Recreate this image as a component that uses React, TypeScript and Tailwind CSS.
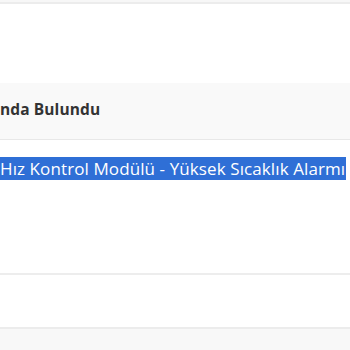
export default function App() {
  return (
    <div className="w-[350px] h-[350px] overflow-hidden bg-white text-[#333]" style={{ fontFamily: '"Open Sans", "Noto Sans", sans-serif' }}>
      <div className="h-[2px] bg-[#f7f7f7]" />
      <div className="h-[2px] bg-[#ececec]" />
      <div className="h-[79px] bg-white" />
      <div className="h-[57px] bg-[#f9f9f9] border-b border-[#e8e8e8] flex items-center">
        <h3 className="text-[15.5px] font-bold text-[#333] whitespace-nowrap leading-none pb-[2px] tracking-[0.1px]">nda Bulundu</h3>
      </div>
      <div className="h-[133px] bg-white pt-[17px]">
        <p className="whitespace-nowrap text-[17px] font-medium leading-[23px] tracking-[0.1px]">
          <span className="bg-[#2f6fd6] text-white pr-[1px]">Hız Kontrol Modülü - Yüksek Sıcaklık Alarmı</span>
        </p>
      </div>
      <div className="h-[54px] border-t-2 border-[#ededed] bg-white" />
      <div className="h-[2px] bg-[#ececec]" />
      <div className="h-[30px] bg-[#f8f8f8]" />
    </div>
  );
}
